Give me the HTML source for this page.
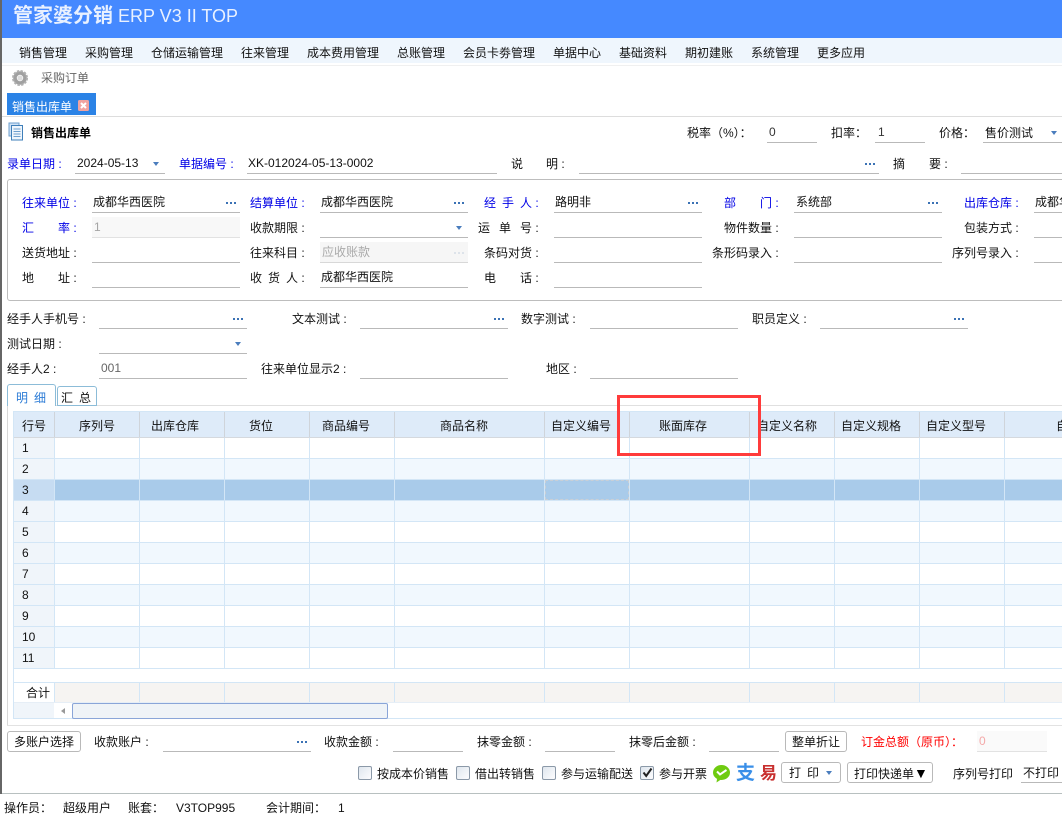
<!DOCTYPE html>
<html lang="zh-CN"><head><meta charset="utf-8"><title>销售出库单</title>
<style>
html,body{margin:0;padding:0;background:#fff}
body{width:1062px;height:821px;position:relative;overflow:hidden;font-family:"Liberation Sans","WenQuanYi Zen Hei","Noto Sans CJK SC",sans-serif;font-size:12px;color:#111}
body div,body span.t{position:absolute}
.t{white-space:nowrap;line-height:16px;font-size:12px;color:#111}
.b{color:#0000e6}
.n{color:#111}
.g6 b{font-weight:normal;letter-spacing:6px}
.g9 b{font-weight:normal;letter-spacing:9px}
.u{height:1px;background:#b9b9b9}
.d{width:2px;height:2px;background:#3b72b5;box-shadow:4px 0 #3b72b5,8px 0 #3b72b5}
.a{width:0;height:0;border-top:4px solid #4a7dbd;border-left:3.5px solid transparent;border-right:3.5px solid transparent}
.r{left:14px;width:1048px;height:20px}
.rn{left:14px;width:40px;height:20px;background:#f0f5fa}
.v{width:1px;background:#d3e6f6}
.hv{width:1px;top:412px;height:25px;background:#cfd4da}
.btn{box-sizing:border-box;border:1px solid #b9b9b9;border-radius:3px;background:#fff;height:21px;line-height:20px;text-align:center;white-space:nowrap;color:#111}
.cb{box-sizing:border-box;width:14px;height:14px;border:1px solid #8b99a8;border-radius:2px;background:linear-gradient(135deg,#dfe6ee,#fdfdfe)}
</style></head><body>

<div style="left:0;top:0;width:1062px;height:38px;background:#4589ff"></div>
<span class="t" style="left:13px;top:4px;font-size:20px;line-height:24px;color:#e9f1ff;font-weight:bold">管家婆分销</span>
<span class="t" style="left:118px;top:4px;font-size:18px;line-height:24px;color:#e9f1ff">ERP V3 II TOP</span>

<div style="left:0;top:38px;width:1062px;height:25px;background:#eff6fd"></div>
<div style="left:0;top:65px;width:1062px;height:1px;background:#f0f0f0"></div>
<span class="t" style="left:19px;top:45px">销售管理</span>
<span class="t" style="left:85px;top:45px">采购管理</span>
<span class="t" style="left:151px;top:45px">仓储运输管理</span>
<span class="t" style="left:241px;top:45px">往来管理</span>
<span class="t" style="left:307px;top:45px">成本费用管理</span>
<span class="t" style="left:397px;top:45px">总账管理</span>
<span class="t" style="left:463px;top:45px">会员卡劵管理</span>
<span class="t" style="left:553px;top:45px">单据中心</span>
<span class="t" style="left:619px;top:45px">基础资料</span>
<span class="t" style="left:685px;top:45px">期初建账</span>
<span class="t" style="left:751px;top:45px">系统管理</span>
<span class="t" style="left:817px;top:45px">更多应用</span>

<svg style="position:absolute;left:12px;top:70px" width="16" height="16" viewBox="0 0 16 16"><circle cx="8" cy="8" r="5" fill="none" stroke="#a0a0a0" stroke-width="3.6"/><circle cx="8" cy="8" r="7" fill="none" stroke="#b0b0b0" stroke-width="2" stroke-dasharray="2.4 1.3"/><circle cx="8" cy="8" r="2.6" fill="#dcdcdc"/></svg>
<span class="t" style="left:41px;top:70px;color:#666">采购订单</span>

<div style="left:7px;top:93px;width:89px;height:22px;background:#2b83e6"></div>
<span class="t" style="left:12px;top:99px;color:#fff">销售出库单</span>
<svg style="position:absolute;left:78px;top:100px" width="11" height="11" viewBox="0 0 11 11"><rect width="11" height="11" rx="1.5" fill="#f0a3a0"/><path d="M3 3L8 8M8 3L3 8" stroke="#fff" stroke-width="2"/></svg>
<div style="left:0;top:116px;width:1062px;height:1px;background:#ddd"></div>

<svg style="position:absolute;left:8px;top:122px" width="16" height="19" viewBox="0 0 16 19"><rect x="1" y="1" width="10" height="13" fill="#cfe2f5" stroke="#6d9fce"/><rect x="3.500" y="3.500" width="11" height="14.500" fill="#eef5fc" stroke="#3f7fb9"/><path d="M5.500 7h7M5.500 9.500h7M5.500 12h7M5.500 14.500h7" stroke="#6d9fce"/></svg>
<span class="t" style="left:31px;top:125px;font-weight:bold;color:#000">销售出库单</span>

<span class="t" style="left:687px;top:125px">税率（%）：</span>
<span class="t" style="left:769px;top:124px;color:#333">0</span><div class="u" style="left:767px;top:142px;width:50px"></div>
<span class="t" style="left:831px;top:125px">扣率：</span>
<span class="t" style="left:878px;top:124px;color:#333">1</span><div class="u" style="left:875px;top:142px;width:50px"></div>
<span class="t" style="left:939px;top:125px">价格：</span>
<span class="t" style="left:985px;top:125px">售价测试</span><div class="u" style="left:983px;top:142px;width:79px"></div><div class="a" style="left:1051px;top:131px"></div>

<span class="t b" style="left:7px;top:156px">录单日期 :</span>
<span class="t" style="left:77px;top:155px">2024-05-13</span><div class="u" style="left:75px;top:173px;width:90px"></div><div class="a" style="left:153px;top:162px"></div>
<span class="t b" style="left:179px;top:156px">单据编号 :</span>
<span class="t" style="left:248px;top:155px">XK-012024-05-13-0002</span><div class="u" style="left:247px;top:173px;width:250px"></div>
<span class="t" style="left:511px;top:156px">说</span><span class="t" style="left:546px;top:156px">明 :</span>
<div class="u" style="left:579px;top:173px;width:300px"></div><div class="d" style="left:865px;top:163px"></div>
<span class="t" style="left:893px;top:156px">摘</span><span class="t" style="left:929px;top:156px">要 :</span>
<div class="u" style="left:961px;top:173px;width:101px"></div>

<div style="left:7px;top:179px;width:1060px;height:120px;border:1px solid #bdbdbd;border-radius:3px;box-sizing:content-box"></div>

<span class="t b" style="left:22px;top:195px">往来单位 :</span>
<span class="t" style="left:93px;top:194px">成都华西医院</span><div class="u" style="left:92px;top:212px;width:148px"></div><div class="d" style="left:226px;top:202px"></div>
<span class="t b" style="left:250px;top:195px">结算单位 :</span>
<span class="t" style="left:321px;top:194px">成都华西医院</span><div class="u" style="left:320px;top:212px;width:148px"></div><div class="d" style="left:454px;top:202px"></div>
<span class="t b g6" style="left:484px;top:195px"><b>经手</b>人 :</span>
<span class="t" style="left:555px;top:194px">路明非</span><div class="u" style="left:554px;top:212px;width:148px"></div><div class="d" style="left:688px;top:202px"></div>
<span class="t b" style="left:724px;top:195px">部　　门 :</span>
<span class="t" style="left:796px;top:194px">系统部</span><div class="u" style="left:794px;top:212px;width:148px"></div><div class="d" style="left:928px;top:202px"></div>
<span class="t b" style="left:964px;top:195px">出库仓库 :</span>
<span class="t" style="left:1035px;top:194px">成都华西医院</span><div class="u" style="left:1034px;top:212px;width:28px"></div>

<span class="t b" style="left:22px;top:220px">汇　　率 :</span>
<div style="left:92px;top:217px;width:148px;height:20px;background:#f8f8f8;border-bottom:1px solid #e2e2e2"></div><span class="t" style="left:94px;top:219px;color:#a5a5a5">1</span>
<span class="t n" style="left:250px;top:220px">收款期限 :</span>
<div class="u" style="left:320px;top:237px;width:148px"></div><div class="a" style="left:456px;top:226px"></div>
<span class="t n g9" style="left:478px;top:220px"><b>运单</b>号 :</span>
<div class="u" style="left:554px;top:237px;width:148px"></div>
<span class="t n" style="left:724px;top:220px">物件数量 :</span>
<div class="u" style="left:794px;top:237px;width:148px"></div>
<span class="t n" style="left:964px;top:220px">包装方式 :</span>
<div class="u" style="left:1034px;top:237px;width:28px"></div>

<span class="t n" style="left:22px;top:245px">送货地址 :</span>
<div class="u" style="left:92px;top:262px;width:148px"></div>
<span class="t n" style="left:250px;top:245px">往来科目 :</span>
<div style="left:320px;top:242px;width:148px;height:20px;background:#f6f6f6;border-bottom:1px solid #d8d8d8"></div><span class="t" style="left:322px;top:244px;color:#aaa">应收账款</span>
<div class="d" style="left:454px;top:252px;background:#dde3ea;box-shadow:4px 0 #dde3ea,8px 0 #dde3ea"></div>
<span class="t n" style="left:484px;top:245px">条码对货 :</span>
<div class="u" style="left:554px;top:262px;width:148px"></div>
<span class="t n" style="left:712px;top:245px">条形码录入 :</span>
<div class="u" style="left:794px;top:262px;width:148px"></div>
<span class="t n" style="left:952px;top:245px">序列号录入 :</span>
<div class="u" style="left:1034px;top:262px;width:28px"></div>

<span class="t n" style="left:22px;top:270px">地　　址 :</span>
<div class="u" style="left:92px;top:287px;width:148px"></div>
<span class="t n g6" style="left:250px;top:270px"><b>收货</b>人 :</span>
<span class="t" style="left:321px;top:269px">成都华西医院</span><div class="u" style="left:320px;top:287px;width:148px"></div>
<span class="t n" style="left:484px;top:270px">电　　话 :</span>
<div class="u" style="left:554px;top:287px;width:148px"></div>

<span class="t n" style="left:7px;top:311px">经手人手机号 :</span>
<div class="u" style="left:99px;top:328px;width:148px"></div><div class="d" style="left:233px;top:318px"></div>
<span class="t n" style="left:292px;top:311px">文本测试 :</span>
<div class="u" style="left:360px;top:328px;width:148px"></div><div class="d" style="left:494px;top:318px"></div>
<span class="t n" style="left:521px;top:311px">数字测试 :</span>
<div class="u" style="left:590px;top:328px;width:148px"></div>
<span class="t n" style="left:752px;top:311px">职员定义 :</span>
<div class="u" style="left:820px;top:328px;width:148px"></div><div class="d" style="left:954px;top:318px"></div>

<span class="t n" style="left:7px;top:336px">测试日期 :</span>
<div class="u" style="left:99px;top:353px;width:148px"></div><div class="a" style="left:235px;top:342px"></div>

<span class="t n" style="left:7px;top:361px">经手人2 :</span>
<span class="t" style="left:101px;top:360px;color:#666">001</span><div class="u" style="left:99px;top:378px;width:148px"></div>
<span class="t n" style="left:261px;top:361px">往来单位显示2 :</span>
<div class="u" style="left:360px;top:378px;width:148px"></div>
<span class="t n" style="left:546px;top:361px">地区 :</span>
<div class="u" style="left:590px;top:378px;width:148px"></div>

<div style="left:7px;top:405px;width:1055px;height:1px;background:#e0e0e0"></div>
<div style="left:7px;top:405px;width:1px;height:320px;background:#d8d8d8"></div>
<div style="left:7px;top:725px;width:1055px;height:1px;background:#e2e2e2"></div>
<div style="left:7px;top:384px;width:49px;height:22px;box-sizing:border-box;border:1px solid #8cbcd8;border-bottom:0;border-radius:3px 3px 0 0;background:#fff"></div>
<div style="left:57px;top:386px;width:40px;height:20px;box-sizing:border-box;border:1px solid #8cbcd8;border-radius:3px 3px 0 0;background:#fff"></div>
<span class="t" style="left:16px;top:390px;color:#2b7bd6;letter-spacing:6px">明细</span>
<span class="t" style="left:61px;top:390px;letter-spacing:6px">汇总</span>

<!-- grid -->
<div style="left:13px;top:411px;width:1049px;height:308px;background:#fff;border:1px solid #d3e6f6;box-sizing:border-box;border-right:0"></div>
<div style="left:14px;top:412px;width:1048px;height:25px;background:#deebf9"></div>
<div style="left:14px;top:437px;width:1048px;height:1px;background:#d5d9de"></div>
<div class="hv" style="left:54px"></div><div class="hv" style="left:139px"></div><div class="hv" style="left:224px"></div><div class="hv" style="left:309px"></div><div class="hv" style="left:394px"></div><div class="hv" style="left:544px"></div><div class="hv" style="left:629px"></div><div class="hv" style="left:749px"></div><div class="hv" style="left:834px"></div><div class="hv" style="left:919px"></div><div class="hv" style="left:1004px"></div>
<span class="t" style="left:22px;top:418px">行号</span>
<span class="t" style="left:79px;top:418px">序列号</span>
<span class="t" style="left:151px;top:418px">出库仓库</span>
<span class="t" style="left:249px;top:418px">货位</span>
<span class="t" style="left:322px;top:418px">商品编号</span>
<span class="t" style="left:440px;top:418px">商品名称</span>
<span class="t" style="left:551px;top:418px">自定义编号</span>
<span class="t" style="left:659px;top:418px">账面库存</span>
<span class="t" style="left:757px;top:418px">自定义名称</span>
<span class="t" style="left:841px;top:418px">自定义规格</span>
<span class="t" style="left:926px;top:418px">自定义型号</span>
<span class="t" style="left:1056px;top:418px">自定义</span>

<div class="r" style="top:459px;background:#f1f8fe"></div>
<div class="r" style="top:480px;background:#a9cbea"></div>
<div class="r" style="top:501px;background:#f1f8fe"></div>
<div class="r" style="top:543px;background:#f1f8fe"></div>
<div class="r" style="top:585px;background:#f1f8fe"></div>
<div class="r" style="top:627px;background:#f1f8fe"></div>
<div class="rn" style="top:438px"></div><div class="rn" style="top:459px"></div><div class="rn" style="top:480px;background:#c6dcf2"></div><div class="rn" style="top:501px"></div><div class="rn" style="top:522px"></div><div class="rn" style="top:543px"></div><div class="rn" style="top:564px"></div><div class="rn" style="top:585px"></div><div class="rn" style="top:606px"></div><div class="rn" style="top:627px"></div><div class="rn" style="top:648px"></div>
<div style="left:14px;top:458px;width:1048px;height:1px;background:#d3e6f6"></div>
<div style="left:14px;top:479px;width:1048px;height:1px;background:#d3e6f6"></div>
<div style="left:14px;top:500px;width:1048px;height:1px;background:#d3e6f6"></div>
<div style="left:14px;top:521px;width:1048px;height:1px;background:#d3e6f6"></div>
<div style="left:14px;top:542px;width:1048px;height:1px;background:#d3e6f6"></div>
<div style="left:14px;top:563px;width:1048px;height:1px;background:#d3e6f6"></div>
<div style="left:14px;top:584px;width:1048px;height:1px;background:#d3e6f6"></div>
<div style="left:14px;top:605px;width:1048px;height:1px;background:#d3e6f6"></div>
<div style="left:14px;top:626px;width:1048px;height:1px;background:#d3e6f6"></div>
<div style="left:14px;top:647px;width:1048px;height:1px;background:#d3e6f6"></div>
<div style="left:14px;top:668px;width:1048px;height:1px;background:#d3e6f6"></div>
<div style="left:14px;top:682px;width:1048px;height:1px;background:#d3e6f6"></div>
<div style="left:54px;top:683px;width:1008px;height:19px;background:#f6f4f2"></div>
<div style="left:14px;top:702px;width:1048px;height:1px;background:#e6eef6"></div>
<div class="v" style="left:54px;top:438px;height:230px"></div><div class="v" style="left:139px;top:438px;height:230px"></div><div class="v" style="left:224px;top:438px;height:230px"></div><div class="v" style="left:309px;top:438px;height:230px"></div><div class="v" style="left:394px;top:438px;height:230px"></div><div class="v" style="left:544px;top:438px;height:230px"></div><div class="v" style="left:629px;top:438px;height:230px"></div><div class="v" style="left:749px;top:438px;height:230px"></div><div class="v" style="left:834px;top:438px;height:230px"></div><div class="v" style="left:919px;top:438px;height:230px"></div><div class="v" style="left:1004px;top:438px;height:230px"></div>
<div class="v" style="left:54px;top:683px;height:19px"></div><div class="v" style="left:139px;top:683px;height:19px"></div><div class="v" style="left:224px;top:683px;height:19px"></div><div class="v" style="left:309px;top:683px;height:19px"></div><div class="v" style="left:394px;top:683px;height:19px"></div><div class="v" style="left:544px;top:683px;height:19px"></div><div class="v" style="left:629px;top:683px;height:19px"></div><div class="v" style="left:749px;top:683px;height:19px"></div><div class="v" style="left:834px;top:683px;height:19px"></div><div class="v" style="left:919px;top:683px;height:19px"></div><div class="v" style="left:1004px;top:683px;height:19px"></div>
<div style="left:545px;top:480px;width:84px;height:20px;box-sizing:border-box;border:1px dashed #c9cfd6"></div>

<span class="t n" style="left:22px;top:440px">1</span>
<span class="t n" style="left:22px;top:461px">2</span>
<span class="t n" style="left:22px;top:482px">3</span>
<span class="t n" style="left:22px;top:503px">4</span>
<span class="t n" style="left:22px;top:524px">5</span>
<span class="t n" style="left:22px;top:545px">6</span>
<span class="t n" style="left:22px;top:566px">7</span>
<span class="t n" style="left:22px;top:587px">8</span>
<span class="t n" style="left:22px;top:608px">9</span>
<span class="t n" style="left:22px;top:629px">10</span>
<span class="t n" style="left:22px;top:650px">11</span>
<span class="t" style="left:26px;top:685px">合计</span>

<div style="left:14px;top:703px;width:40px;height:15px;background:#f0f5fa"></div>
<div style="left:54px;top:703px;width:18px;height:15px;background:#fff"></div>
<div style="left:61px;top:708px;width:0;height:0;border-right:4px solid #999;border-top:3px solid transparent;border-bottom:3px solid transparent"></div>
<div style="left:72px;top:703px;width:316px;height:16px;box-sizing:border-box;background:#eff3f7;border:1px solid #8aa5d8;border-radius:2px"></div>

<!-- red annotation -->
<div style="left:617px;top:395px;width:144px;height:61px;box-sizing:border-box;border:3px solid #ff3b3b"></div>

<!-- footer -->
<div class="btn" style="left:7px;top:731px;width:74px">多账户选择</div>
<span class="t n" style="left:94px;top:734px">收款账户 :</span>
<div class="u" style="left:163px;top:751px;width:148px"></div><div class="d" style="left:297px;top:741px"></div>
<span class="t n" style="left:324px;top:734px">收款金额 :</span>
<div class="u" style="left:393px;top:751px;width:70px"></div>
<span class="t n" style="left:477px;top:734px">抹零金额 :</span>
<div class="u" style="left:545px;top:751px;width:70px"></div>
<span class="t n" style="left:629px;top:734px">抹零后金额 :</span>
<div class="u" style="left:709px;top:751px;width:70px"></div>
<div class="btn" style="left:785px;top:731px;width:62px">整单折让</div>
<span class="t" style="left:861px;top:734px;color:#f00">订金总额（原币）：</span>
<div style="left:977px;top:731px;width:70px;height:20px;background:#fafafa;border-bottom:1px solid #e2e2e2"></div>
<span class="t" style="left:979px;top:733px;color:#f4a9a9">0</span>

<div class="cb" style="left:358px;top:766px"></div>
<span class="t n" style="left:377px;top:766px">按成本价销售</span>
<div class="cb" style="left:456px;top:766px"></div>
<span class="t n" style="left:475px;top:766px">借出转销售</span>
<div class="cb" style="left:542px;top:766px"></div>
<span class="t n" style="left:561px;top:766px">参与运输配送</span>
<div class="cb" style="left:640px;top:766px"></div>
<svg style="position:absolute;left:641px;top:766px" width="13" height="13" viewBox="0 0 13 13"><path d="M2.500 6.500L5.200 10L10.500 2.500" fill="none" stroke="#222" stroke-width="2"/></svg>
<span class="t n" style="left:659px;top:766px">参与开票</span>

<svg style="position:absolute;left:712px;top:764px" width="19" height="19" viewBox="0 0 19 19"><ellipse cx="9.500" cy="8.500" rx="8.500" ry="7.500" fill="#6fcb10"/><path d="M5 15L4.500 18.500L9 15.500Z" fill="#6fcb10"/><path d="M5 7.500L8 10.500L14.500 6" fill="none" stroke="#fff" stroke-width="2"/></svg>
<span class="t" style="left:736px;top:764px;font-size:19px;line-height:20px;color:#3a8fe8;font-weight:bold">支</span>
<span class="t" style="left:760px;top:764px;font-size:17px;line-height:20px;font-weight:bold;color:#c8302f">易</span>

<div class="btn" style="left:781px;top:762px;width:60px;text-align:left;padding-left:7px;letter-spacing:6px">打印</div><div class="a" style="left:826px;top:771px"></div>
<div class="btn" style="left:847px;top:762px;width:86px;text-align:left;padding-left:6px">打印快递单<span style="font-size:14px;color:#000">▼</span></div>
<span class="t n" style="left:953px;top:766px">序列号打印</span>
<span class="t" style="left:1023px;top:765px">不打印</span><div class="u" style="left:1021px;top:782px;width:41px"></div>

<div style="left:2px;top:793px;width:1060px;height:1px;background:#b8c0c0"></div>
<div style="left:0;top:0;width:2px;height:794px;background:#666"></div>
<span class="t n" style="left:4px;top:800px">操作员：</span>
<span class="t n" style="left:63px;top:800px">超级用户</span>
<span class="t n" style="left:128px;top:800px">账套：</span>
<span class="t n" style="left:176px;top:800px">V3TOP995</span>
<span class="t n" style="left:266px;top:800px">会计期间：</span>
<span class="t n" style="left:338px;top:800px">1</span>
</body></html>
